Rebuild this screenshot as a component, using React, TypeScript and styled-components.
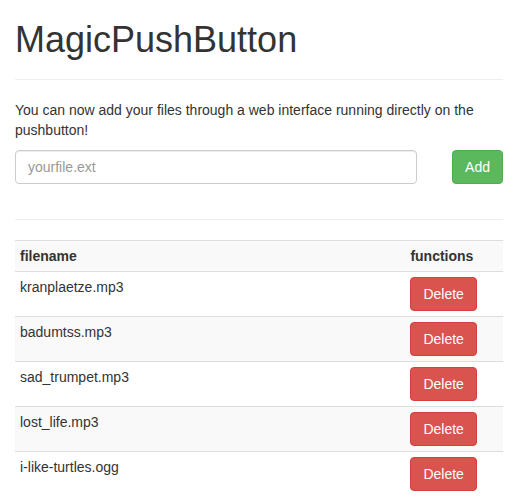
import styled, { createGlobalStyle } from "styled-components";

const GlobalStyle = createGlobalStyle`
  * {
    box-sizing: border-box;
  }

  body {
    margin: 0;
    background: #ffffff;
    color: #333333;
    font-family: "Liberation Sans", Arial, sans-serif;
    font-size: 14px;
    line-height: 1.42857143;
  }
`;

const Page = styled.div`
  padding: 0 14px 0 15px;
`;

const PageHeader = styled.div`
  margin: 0 0 20px;
  padding-bottom: 9px;
  border-bottom: 1px solid #eeeeee;
`;

const Title = styled.h1`
  margin: 20px 0 10px;
  font-size: 36px;
  font-weight: 500;
  line-height: 1.1;
`;

const Intro = styled.p`
  margin: 0 0 10px;
`;

const AddForm = styled.form`
  display: flex;
  justify-content: space-between;
  align-items: flex-start;
  padding-bottom: 15px;
`;

const FileInput = styled.input`
  display: block;
  width: 402px;
  height: 34px;
  padding: 6px 12px;
  font-family: inherit;
  font-size: 14px;
  line-height: 1.42857143;
  color: #555555;
  background: #ffffff;
  border: 1px solid #cccccc;
  border-radius: 4px;
  box-shadow: inset 0 1px 1px rgba(0, 0, 0, 0.075);
  outline: none;

  &::placeholder {
    color: #999999;
  }
`;

const Button = styled.button<{ $variant: "success" | "danger" }>`
  display: inline-block;
  padding: 6px 12px;
  font-family: inherit;
  font-size: 14px;
  line-height: 1.42857143;
  color: #ffffff;
  border: 1px solid
    ${(p) => (p.$variant === "success" ? "#4cae4c" : "#d43f3a")};
  background: ${(p) => (p.$variant === "success" ? "#5cb85c" : "#d9534f")};
  border-radius: 4px;
  cursor: pointer;
`;

const Divider = styled.hr`
  margin: 20px 0;
  border: 0;
  border-top: 1px solid #eeeeee;
`;

const FileTable = styled.table`
  width: 100%;
  margin-bottom: 20px;
  border-collapse: collapse;
  border-spacing: 0;

  tbody > tr:nth-of-type(odd) {
    background: #f9f9f9;
  }
`;

const HeadCell = styled.th<{ $narrow?: boolean }>`
  padding: 5px;
  text-align: left;
  vertical-align: bottom;
  font-weight: bold;
  line-height: 1.42857143;
  border-top: 1px solid #dddddd;
  width: ${(p) => (p.$narrow ? "20%" : "auto")};
`;

const Cell = styled.td`
  padding: 5px;
  vertical-align: top;
  line-height: 1.42857143;
  border-top: 1px solid #dddddd;
`;

const files = [
  "kranplaetze.mp3",
  "badumtss.mp3",
  "sad_trumpet.mp3",
  "lost_life.mp3",
  "i-like-turtles.ogg",
];

export default function App() {
  return (
    <Page>
      <GlobalStyle />
      <PageHeader>
        <Title>MagicPushButton</Title>
      </PageHeader>
      <Intro>
        You can now add your files through a web interface running directly on
        the pushbutton!
      </Intro>
      <AddForm onSubmit={(e) => e.preventDefault()}>
        <FileInput type="text" placeholder="yourfile.ext" />
        <Button type="submit" $variant="success">
          Add
        </Button>
      </AddForm>
      <Divider />
      <FileTable>
        <tbody>
          <tr>
            <HeadCell>filename</HeadCell>
            <HeadCell $narrow>functions</HeadCell>
          </tr>
          {files.map((name) => (
            <tr key={name}>
              <Cell>{name}</Cell>
              <Cell>
                <Button type="button" $variant="danger">
                  Delete
                </Button>
              </Cell>
            </tr>
          ))}
        </tbody>
      </FileTable>
    </Page>
  );
}
